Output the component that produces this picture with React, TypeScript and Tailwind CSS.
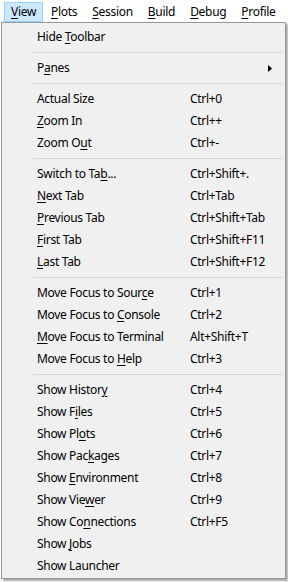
import React from "react";

type Item =
  | { sep: true }
  | { label: string; u?: number; sc?: string; sub?: boolean };

const items: Item[] = [
  { label: "Hide Toolbar", u: 5 },
  { sep: true },
  { label: "Panes", u: 1, sub: true },
  { sep: true },
  { label: "Actual Size", sc: "Ctrl+0" },
  { label: "Zoom In", u: 0, sc: "Ctrl++" },
  { label: "Zoom Out", u: 6, sc: "Ctrl+-" },
  { sep: true },
  { label: "Switch to Tab...", u: 12, sc: "Ctrl+Shift+." },
  { label: "Next Tab", u: 0, sc: "Ctrl+Tab" },
  { label: "Previous Tab", u: 0, sc: "Ctrl+Shift+Tab" },
  { label: "First Tab", u: 0, sc: "Ctrl+Shift+F11" },
  { label: "Last Tab", u: 0, sc: "Ctrl+Shift+F12" },
  { sep: true },
  { label: "Move Focus to Source", u: 18, sc: "Ctrl+1" },
  { label: "Move Focus to Console", u: 14, sc: "Ctrl+2" },
  { label: "Move Focus to Terminal", u: 0, sc: "Alt+Shift+T" },
  { label: "Move Focus to Help", u: 14, sc: "Ctrl+3" },
  { sep: true },
  { label: "Show History", u: 11, sc: "Ctrl+4" },
  { label: "Show Files", u: 6, sc: "Ctrl+5" },
  { label: "Show Plots", u: 7, sc: "Ctrl+6" },
  { label: "Show Packages", u: 8, sc: "Ctrl+7" },
  { label: "Show Environment", u: 5, sc: "Ctrl+8" },
  { label: "Show Viewer", u: 8, sc: "Ctrl+9" },
  { label: "Show Connections", u: 7, sc: "Ctrl+F5" },
  { label: "Show Jobs", u: 5 },
  { label: "Show Launcher" },
];

function Label({ text, u }: { text: string; u?: number }) {
  if (u === undefined) return <>{text}</>;
  return (
    <>
      {text.slice(0, u)}
      <span className="underline underline-offset-2">{text[u]}</span>
      {text.slice(u + 1)}
    </>
  );
}

const bar = [
  { t: "View", u: 0 },
  { t: "Plots", u: 0 },
  { t: "Session", u: 0 },
  { t: "Build", u: 0 },
  { t: "Debug", u: 0 },
  { t: "Profile", u: 0 },
];

export default function App() {
  return (
    <div
      className="relative w-[288px] h-[582px] bg-white overflow-hidden text-[12px] tracking-[-0.3px] text-black"
      style={{ fontFamily: '"Noto Sans", "Open Sans", sans-serif' }}
    >
      <div className="flex h-[22px] items-center pl-[4px] gap-[1px]">
        {bar.map((b, i) => (
          <div
            key={b.t}
            className={
              i === 0
                ? "h-[20px] mt-[1px] px-[6px] flex items-center bg-[#cce8ff] border border-[#99d1ff]"
                : "h-[20px] mt-[1px] px-[7px] flex items-center"
            }
          >
            <Label text={b.t} u={b.u} />
          </div>
        ))}
      </div>
      <div className="absolute left-[1px] top-[22px] w-[285px] bg-[#f0f0f0] border border-[#979797] pt-[3px] pb-[1px] shadow-[2px_2px_2px_rgba(0,0,0,0.35)]">
        {items.map((it, i) =>
          "sep" in it ? (
            <div key={i} className="h-[9px] flex items-center pl-[31px] pr-[2px]">
              <div className="h-px w-full bg-[#d7d7d7]" />
            </div>
          ) : (
            <div key={i} className="h-[22px] flex items-center pl-[35px] relative">
              <div className="w-[153px] shrink-0 whitespace-nowrap">
                <Label text={it.label} u={it.u} />
              </div>
              <div className="whitespace-nowrap">{it.sc}</div>
              {it.sub && (
                <svg
                  className="absolute left-[266px] top-[8px]"
                  width="5"
                  height="7"
                  viewBox="0 0 5 7"
                >
                  <polygon points="0,0 4,3.5 0,7" fill="#000" />
                </svg>
              )}
            </div>
          )
        )}
      </div>
    </div>
  );
}
